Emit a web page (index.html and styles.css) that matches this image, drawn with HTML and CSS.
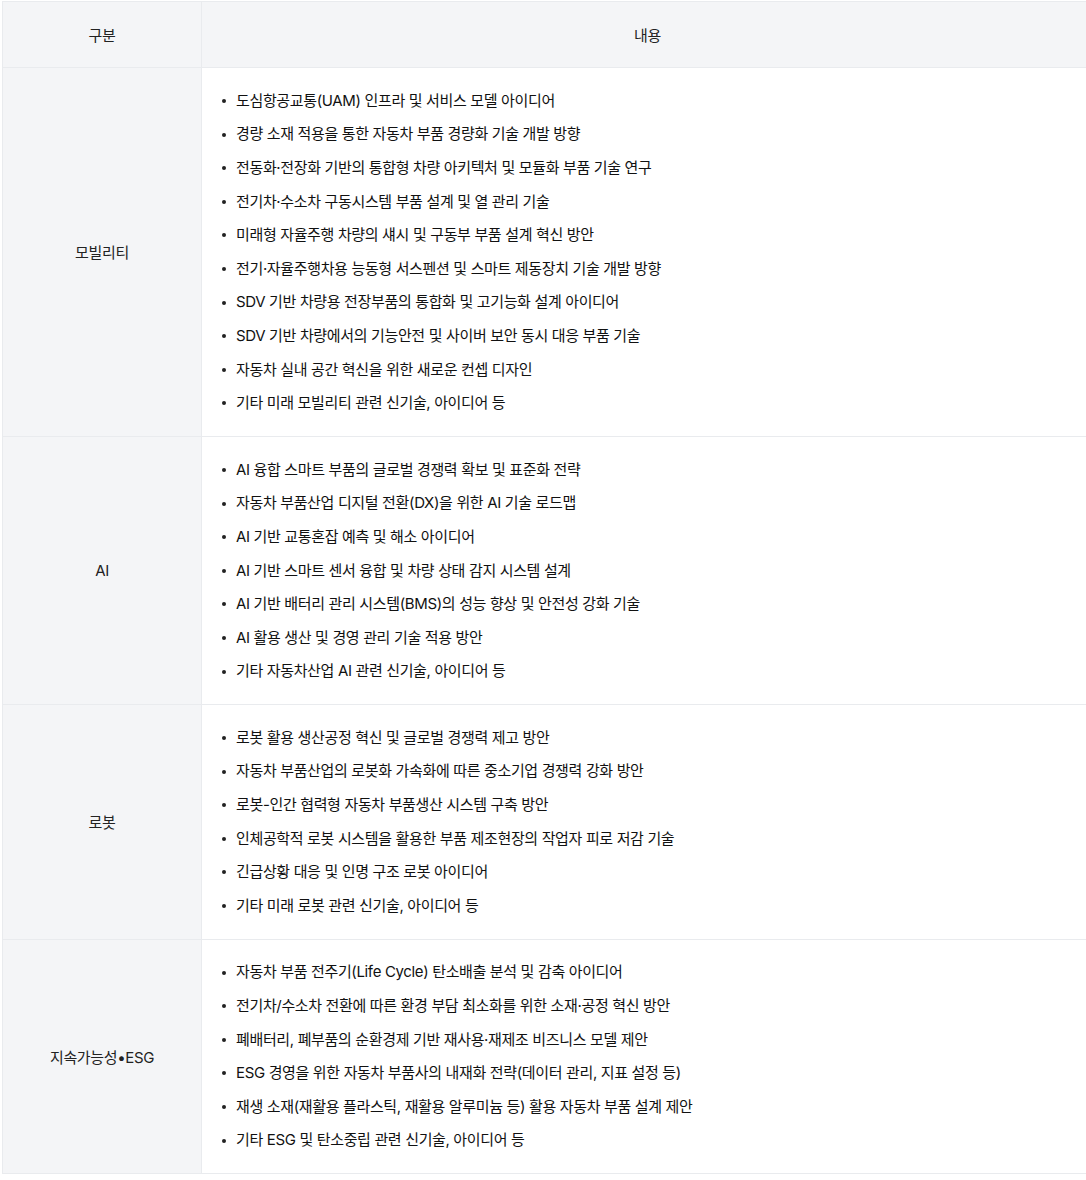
FILE: index.html
```html
<!DOCTYPE html>
<html lang="ko">
<head>
<meta charset="utf-8">
<link rel="stylesheet" href="styles.css">
</head>
<body>
<table class="tbl">
  <thead>
    <tr><th class="c1">구분</th><th class="c2">내용</th></tr>
  </thead>
  <tbody>
    <tr>
      <th class="c1">모빌리티</th>
      <td class="c2"><ul>
        <li>도심항공교통(UAM) 인프라 및 서비스 모델 아이디어</li>
        <li>경량 소재 적용을 통한 자동차 부품 경량화 기술 개발 방향</li>
        <li>전동화·전장화 기반의 통합형 차량 아키텍처 및 모듈화 부품 기술 연구</li>
        <li>전기차·수소차 구동시스템 부품 설계 및 열 관리 기술</li>
        <li>미래형 자율주행 차량의 섀시 및 구동부 부품 설계 혁신 방안</li>
        <li>전기·자율주행차용 능동형 서스펜션 및 스마트 제동장치 기술 개발 방향</li>
        <li>SDV 기반 차량용 전장부품의 통합화 및 고기능화 설계 아이디어</li>
        <li>SDV 기반 차량에서의 기능안전 및 사이버 보안 동시 대응 부품 기술</li>
        <li>자동차 실내 공간 혁신을 위한 새로운 컨셉 디자인</li>
        <li>기타 미래 모빌리티 관련 신기술, 아이디어 등</li>
      </ul></td>
    </tr>
    <tr>
      <th class="c1">AI</th>
      <td class="c2"><ul>
        <li>AI 융합 스마트 부품의 글로벌 경쟁력 확보 및 표준화 전략</li>
        <li>자동차 부품산업 디지털 전환(DX)을 위한 AI 기술 로드맵</li>
        <li>AI 기반 교통혼잡 예측 및 해소 아이디어</li>
        <li>AI 기반 스마트 센서 융합 및 차량 상태 감지 시스템 설계</li>
        <li>AI 기반 배터리 관리 시스템(BMS)의 성능 향상 및 안전성 강화 기술</li>
        <li>AI 활용 생산 및 경영 관리 기술 적용 방안</li>
        <li>기타 자동차산업 AI 관련 신기술, 아이디어 등</li>
      </ul></td>
    </tr>
    <tr>
      <th class="c1">로봇</th>
      <td class="c2"><ul>
        <li>로봇 활용 생산공정 혁신 및 글로벌 경쟁력 제고 방안</li>
        <li>자동차 부품산업의 로봇화 가속화에 따른 중소기업 경쟁력 강화 방안</li>
        <li>로봇-인간 협력형 자동차 부품생산 시스템 구축 방안</li>
        <li>인체공학적 로봇 시스템을 활용한 부품 제조현장의 작업자 피로 저감 기술</li>
        <li>긴급상황 대응 및 인명 구조 로봇 아이디어</li>
        <li>기타 미래 로봇 관련 신기술, 아이디어 등</li>
      </ul></td>
    </tr>
    <tr>
      <th class="c1">지속가능성•ESG</th>
      <td class="c2"><ul>
        <li>자동차 부품 전주기(Life Cycle) 탄소배출 분석 및 감축 아이디어</li>
        <li>전기차/수소차 전환에 따른 환경 부담 최소화를 위한 소재·공정 혁신 방안</li>
        <li>폐배터리, 폐부품의 순환경제 기반 재사용·재제조 비즈니스 모델 제안</li>
        <li>ESG 경영을 위한 자동차 부품사의 내재화 전략(데이터 관리, 지표 설정 등)</li>
        <li>재생 소재(재활용 플라스틱, 재활용 알루미늄 등) 활용 자동차 부품 설계 제안</li>
        <li>기타 ESG 및 탄소중립 관련 신기술, 아이디어 등</li>
      </ul></td>
    </tr>
  </tbody>
</table>
</body>
</html>
```

FILE: styles.css
```css
html, body {
  margin: 0;
  padding: 0;
  background: #ffffff;
  overflow: hidden;
}
body {
  padding: 1px 0 0 2px;
  font-family: Inter, "Noto Sans CJK KR", "Noto Sans", sans-serif;
  color: #111;
  font-size: 15px;
  letter-spacing: -0.35px;
}
.tbl {
  width: 1092px;
  border-collapse: collapse;
  table-layout: fixed;
}
.tbl th, .tbl td {
  border: 1px solid #e9ebee;
  font-weight: 400;
}
.tbl thead th {
  background: #f4f5f7;
  height: 65px;
  padding: 0;
  text-align: center;
  vertical-align: middle;
  color: #222;
}
.tbl .c1 {
  width: 198px;
}
.tbl tbody th {
  background: #f4f5f7;
  text-align: center;
  vertical-align: middle;
  color: #222;
  padding: 0;
}
.tbl td {
  background: #fff;
  padding: 16px 0 16px 20px;
  vertical-align: middle;
}
.tbl ul {
  list-style: none;
  margin: 0;
  padding: 0;
}
.tbl li {
  position: relative;
  line-height: 24px;
  padding: 4.8px 0 4.8px 14px;
  color: #111;
}
.tbl li::before {
  content: "";
  position: absolute;
  left: 0;
  top: 15px;
  width: 4px;
  height: 4px;
  border-radius: 50%;
  background: #222;
}
```
